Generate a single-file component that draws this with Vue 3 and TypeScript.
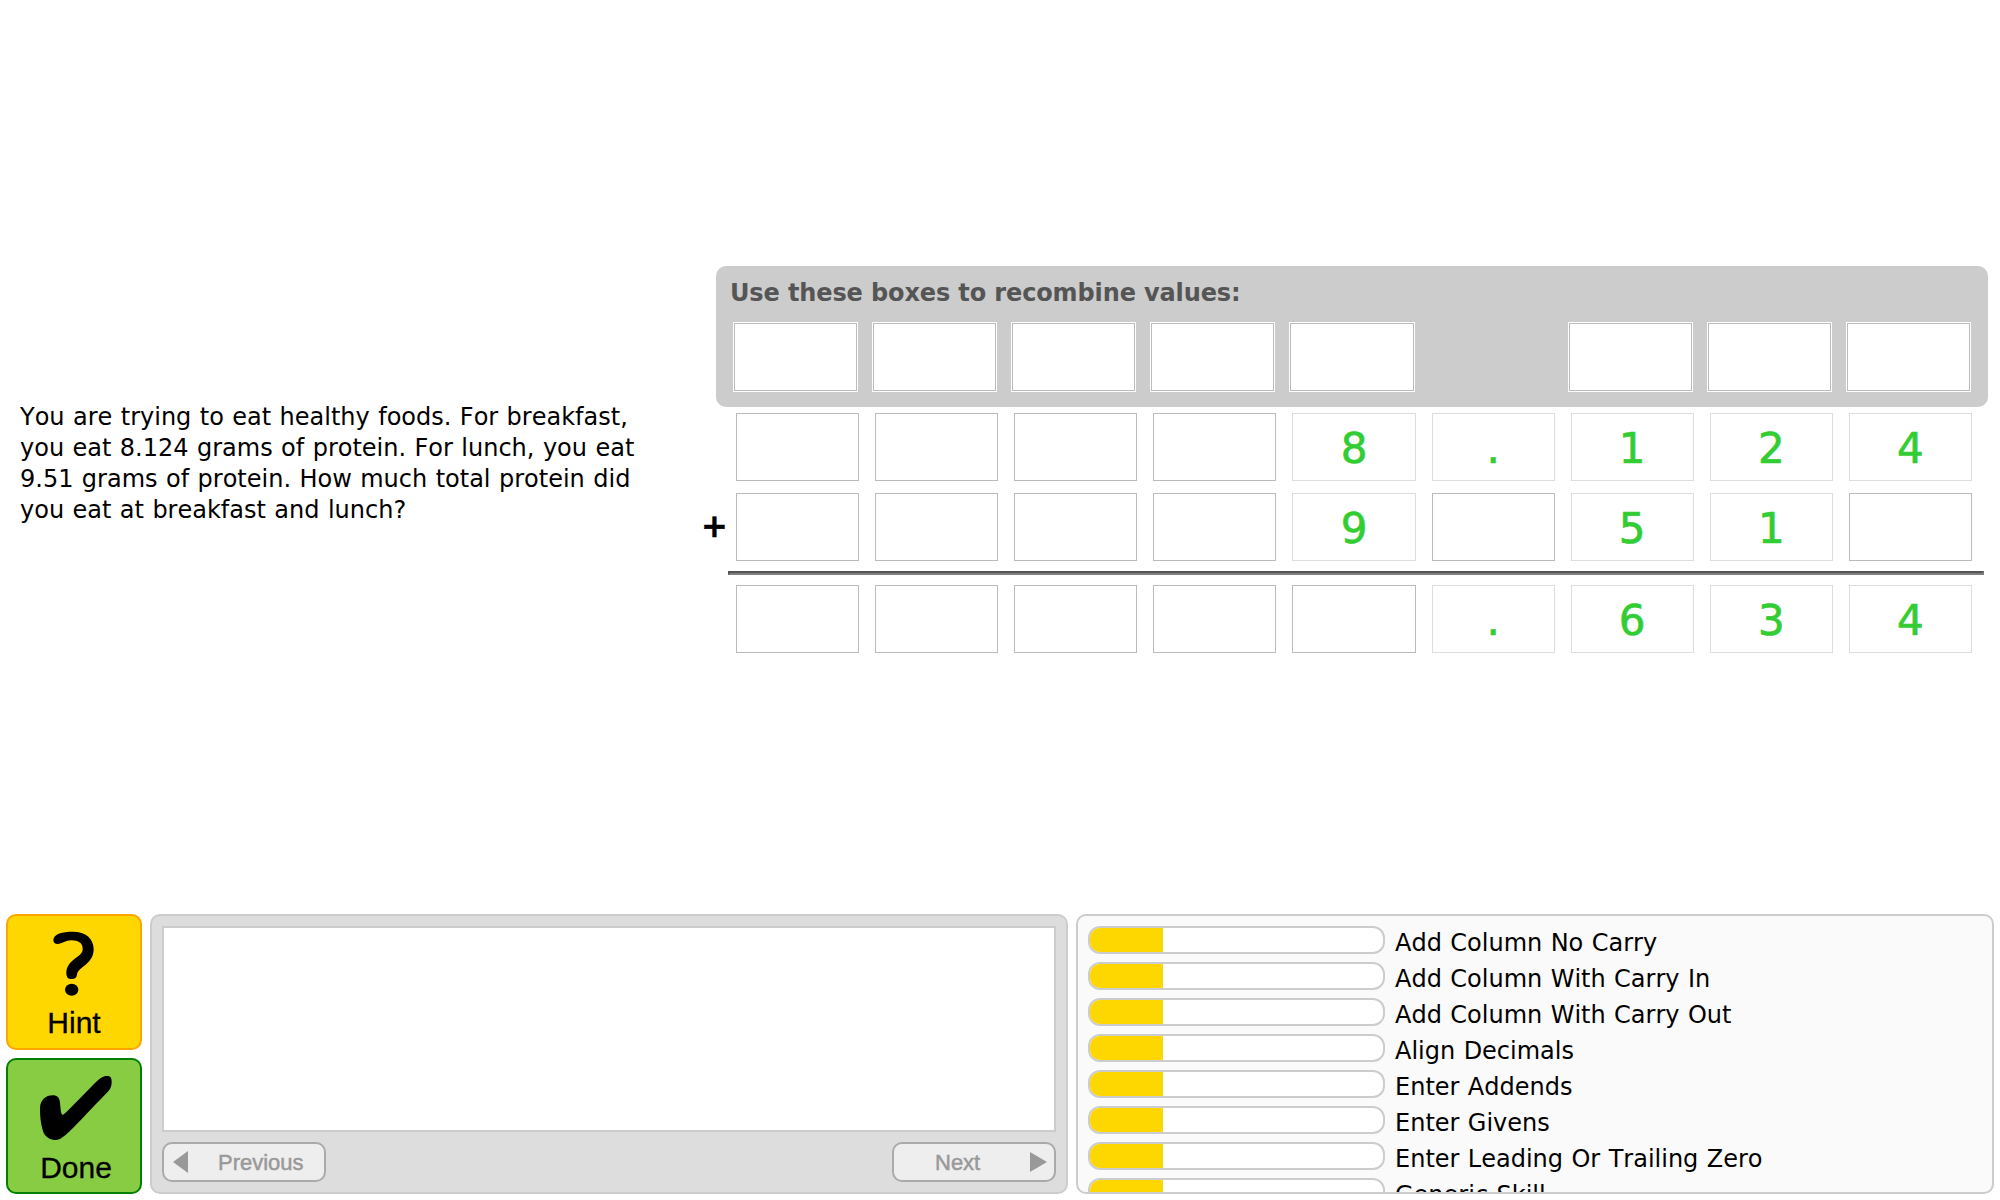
<script setup lang="ts">
interface Cell {
  value: string
}

const toCells = (row: string): Cell[] => row.split('').map((c) => ({ value: c.trim() }))

const carryBoxes: boolean[] = [true, true, true, true, true, false, true, true, true]
const firstAddend = toCells('    8.124')
const secondAddend = toCells('    9 51 ')
const sum = toCells('     .634')

const skills: { name: string; level: number }[] = [
  'Add Column No Carry',
  'Add Column With Carry In',
  'Add Column With Carry Out',
  'Align Decimals',
  'Enter Addends',
  'Enter Givens',
  'Enter Leading Or Trailing Zero',
  'Generic Skill',
].map((name) => ({ name, level: 25 }))
</script>

<template>
  <div class="tutor">
    <main class="problem">
      <p class="statement">
        You are trying to eat healthy foods. For breakfast,<br />
        you eat 8.124 grams of protein. For lunch, you eat<br />
        9.51 grams of protein. How much total protein did<br />
        you eat at breakfast and lunch?
      </p>
      <section class="work">
        <div class="carry">
          <h2 class="carry-title">Use these boxes to recombine values:</h2>
          <div class="cells">
            <div v-for="(box, i) in carryBoxes" :key="i" :class="{ cell: box, 'carry-cell': box }"></div>
          </div>
        </div>
        <div class="cells row-first">
          <div v-for="(c, i) in firstAddend" :key="i" class="cell" :class="{ correct: c.value }">{{ c.value }}</div>
        </div>
        <div class="row-second">
          <span class="operator">+</span>
          <div class="cells">
            <div v-for="(c, i) in secondAddend" :key="i" class="cell" :class="{ correct: c.value }">{{ c.value }}</div>
          </div>
        </div>
        <div class="rule"></div>
        <div class="cells row-sum">
          <div v-for="(c, i) in sum" :key="i" class="cell" :class="{ correct: c.value }">{{ c.value }}</div>
        </div>
      </section>
    </main>

    <footer class="dock">
      <div class="actions">
        <button class="action hint">
          <svg viewBox="18 42 408 408" aria-hidden="true">
            <path d="M160 121C160 101 188 95 218 95C258 95 281 116 281 148C281 172 268 186 252 198C238 209 232 215 231 224C230 232 225 237 215 237C203 237 199 230 199 218C199 200 211 186 226 175C242 163 248 158 248 146C248 130 236 121 214 121C196 121 186 132 173 132C165 132 160 128 160 121Z" />
            <ellipse cx="215" cy="269" rx="20" ry="18" />
          </svg>
          <span>Hint</span>
        </button>
        <button class="action done">
          <svg viewBox="18 474 408 408" aria-hidden="true">
            <path d="M120 624C121 600 137 586 158 586C172 586 178 592 180 608C182 628 183 644 188 644C193 644 210 625 235 600C290 545 302 528 320 528C332 528 335 533 335 546C335 562 330 570 315 584C285 614 215 690 200 702C188 712 180 720 165 720C148 720 133 708 129 694C122 670 120 650 120 624Z" />
          </svg>
          <span>Done</span>
        </button>
      </div>
      <section class="messages">
        <div class="message-text"></div>
        <div class="pager">
          <button class="page-button previous" disabled>
            <svg width="15" height="22" viewBox="0 0 15 22" aria-hidden="true"><path d="M0 11 15 0V22Z" /></svg>
            <span>Previous</span>
          </button>
          <button class="page-button next" disabled>
            <span>Next</span>
            <svg width="17" height="20" viewBox="0 0 17 20" aria-hidden="true"><path d="M17 10 0 0V20Z" /></svg>
          </button>
        </div>
      </section>
      <section class="skills">
        <div v-for="s in skills" :key="s.name" class="skill">
          <div class="bar"><div class="fill" :style="{ width: s.level + '%' }"></div></div>
          <span class="skill-name">{{ s.name }}</span>
        </div>
      </section>
    </footer>
  </div>
</template>

<style>
body {
  margin: 0;
  background: #fff;
}
</style>

<style scoped>
.tutor {
  box-sizing: border-box;
  display: flex;
  flex-direction: column;
  justify-content: space-between;
  width: 2000px;
  height: 1200px;
  padding: 266px 6px 6px;
  overflow: hidden;
  color: #000;
  font-family: Verdana, 'DejaVu Sans', sans-serif;
  font-size: 24px;
  font-kerning: none;
  word-spacing: 0.8px;
}
.problem {
  display: flex;
  justify-content: space-between;
  padding: 0 6px 0 14px;
}
.statement {
  margin: 136px 0 0;
  line-height: 31px;
  white-space: nowrap;
}
.work {
  width: 1272px;
}
.carry {
  box-sizing: border-box;
  height: 141px;
  padding: 12px 18px 0;
  border-radius: 10px;
  background: #ccc;
}
.carry-title {
  margin: 0 0 14px -4px;
  color: #555;
  font-size: 24px;
  letter-spacing: -0.12px;
  line-height: 31px;
  white-space: nowrap;
  word-spacing: 0;
}
.cells {
  display: grid;
  grid-template-columns: repeat(9, 1fr);
  gap: 16px;
  width: 1236px;
}
.cell {
  box-sizing: border-box;
  height: 68px;
  border: 1px solid #bbb;
  background: #fff;
  color: #32cd32;
  font-size: 42px;
  line-height: 70px;
  text-align: center;
  -webkit-text-stroke: 0.7px #32cd32;
}
.carry-cell {
  box-shadow: 0 0 0 1px #fff;
}
.cell.correct {
  border-color: #ddd;
}
.row-first {
  margin: 6px 0 12px 20px;
}
.row-second {
  display: flex;
  margin-left: -14px;
}
.operator {
  flex: none;
  width: 34px;
  font-size: 32px;
  font-weight: bold;
  line-height: 67px;
  text-indent: -1px;
  -webkit-text-stroke: 0.5px #000;
}
.rule {
  margin: 10px 4px 10px 12px;
  border: 2px solid #7f7f7f;
  border-top-color: #555;
  border-left-color: #555;
}
.row-sum {
  margin-left: 20px;
}
.dock {
  display: flex;
  gap: 8px;
  height: 280px;
}
.actions {
  display: flex;
  flex-direction: column;
  gap: 8px;
}
.action {
  position: relative;
  box-sizing: border-box;
  width: 136px;
  height: 136px;
  padding: 0;
  border: 2px solid orange;
  border-radius: 10px;
  background: #ffd700;
  color: #000;
  font: 30px 'Liberation Sans', Arial, sans-serif;
  -webkit-text-stroke: 0.3px #000;
}
.action svg {
  position: absolute;
  inset: -2px;
  width: 136px;
  height: 136px;
}
.action span {
  display: block;
  padding-top: 81px;
  line-height: 34px;
}
.done {
  border-color: green;
  background: #8c4;
}
.done span {
  padding: 83px 0 0 4px;
}
.messages,
.skills {
  box-sizing: border-box;
  width: 918px;
  border: 2px solid #ccc;
  border-radius: 10px;
  background: #ddd;
}
.messages {
  display: flex;
  flex-direction: column;
  gap: 10px;
  padding: 10px;
}
.message-text {
  flex: 1;
  border: 2px solid #ccc;
  background: #fff;
}
.pager {
  display: flex;
  justify-content: space-between;
}
.page-button {
  box-sizing: border-box;
  display: flex;
  align-items: center;
  width: 164px;
  height: 40px;
  border: 2px solid #aaa;
  border-radius: 10px;
  background: #eee;
  color: #999;
  font: 22px 'Liberation Sans', Arial, sans-serif;
  -webkit-text-stroke: 0.5px #999;
}
.page-button svg {
  flex: none;
  fill: #999;
}
.page-button span {
  padding-top: 1px;
}
.previous {
  padding: 0 0 0 9px;
}
.previous span {
  margin-left: 30px;
}
.next {
  justify-content: space-between;
  padding: 0 7px 0 41px;
}
.skills {
  overflow: hidden;
  padding: 10px;
  background: #fafafa;
}
.skill {
  display: flex;
  height: 36px;
}
.bar {
  box-sizing: border-box;
  width: 297px;
  height: 28px;
  overflow: hidden;
  border: 2px solid #ccc;
  border-radius: 12px;
  background: #fff;
}
.fill {
  height: 100%;
  background: #ffd700;
}
.skill-name {
  margin-left: 10px;
  line-height: 34px;
  white-space: nowrap;
}
</style>
